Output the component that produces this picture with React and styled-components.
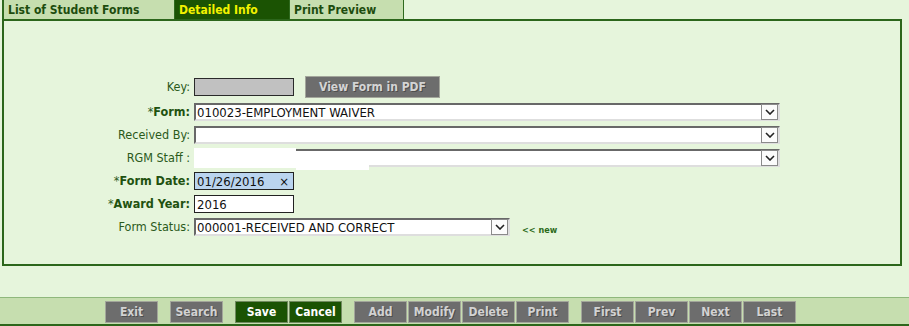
import React from "react"
import styled, { createGlobalStyle } from "styled-components"

const GlobalStyle = createGlobalStyle`
  html, body {
    margin: 0;
    padding: 0;
    background: #e6f5dc;
  }
  body {
    font-family: Tahoma, "DejaVu Sans Condensed", "DejaVu Sans", sans-serif;
  }
`

const tabs = [
    { label: "List of Student Forms", width: 173 },
    { label: "Detailed Info", width: 115, active: true },
    { label: "Print Preview", width: 114 },
]

const buttonGroups = [
    [{ label: "Exit" }],
    [{ label: "Search" }],
    [{ label: "Save", primary: true }, { label: "Cancel", primary: true }],
    [{ label: "Add" }, { label: "Modify" }, { label: "Delete" }, { label: "Print" }],
    [{ label: "First" }, { label: "Prev" }, { label: "Next" }, { label: "Last" }],
]

function Chevron() {
    return (
        <svg width="10" height="6" viewBox="0 0 10 6">
            <path d="M1 1 L5 5 L9 1" fill="none" stroke="#222" strokeWidth="1.6" />
        </svg>
    )
}

function Select({ width, value, children }) {
    return (
        <SelectBox $width={width}>
            <SelectText>{value}</SelectText>
            {children}
            <ArrowBox><Chevron /></ArrowBox>
        </SelectBox>
    )
}

export default function App() {
    return (
        <>
            <GlobalStyle />
            <Page>
                <TabBar>
                    {tabs.map((t, i) => (
                        <Tab key={t.label} $width={t.width} $active={t.active} $first={i === 0}>
                            {t.label}
                        </Tab>
                    ))}
                </TabBar>
                <Panel>
                    <FormGrid>
                        <Label>Key:</Label>
                        <Row>
                            <KeyInput />
                            <PdfButton>View Form in PDF</PdfButton>
                        </Row>

                        <Label><Star>*</Star><b>Form:</b></Label>
                        <Select width={586} value="010023-EMPLOYMENT WAIVER" />

                        <Label>Received By:</Label>
                        <Select width={586} value="" />

                        <Label>RGM Staff :</Label>
                        <Select width={586} value="">
                            <Redact style={{ left: -2, top: -3, width: 102, height: 20 }} />
                            <Redact style={{ left: 100, top: 1, width: 73, height: 18 }} />
                        </Select>

                        <Label><Star>*</Star><b>Form Date:</b></Label>
                        <DateInput>
                            <span>01/26/2016</span>
                            <Clear>×</Clear>
                        </DateInput>

                        <Label><Star>*</Star><b>Award Year:</b></Label>
                        <TextInput>2016</TextInput>

                        <Label>Form Status:</Label>
                        <Row>
                            <Select width={316} value="000001-RECEIVED AND CORRECT" />
                            <NewLink>&lt;&lt; new</NewLink>
                        </Row>
                    </FormGrid>
                </Panel>
                <Footer>
                    {buttonGroups.map((g, i) => (
                        <ButtonGroup key={i}>
                            {g.map((b) => (
                                <ActionButton key={b.label} $primary={b.primary}>{b.label}</ActionButton>
                            ))}
                        </ButtonGroup>
                    ))}
                </Footer>
            </Page>
        </>
    )
}

// styled-components
const Page = styled.div`
width: 909px;
height: 326px;
display: flex;
flex-direction: column;
background: #e6f5dc;
`

const TabBar = styled.div`
display: flex;
height: 19px;
padding-left: 2px;
`

const Tab = styled.div`
box-sizing: border-box;
width: ${(p) => p.$width}px;
height: 19px;
padding: 3px 0 0 4px;
background: ${(p) => (p.$active ? "#1b5303" : "#c6deaf")};
color: ${(p) => (p.$active ? "#f2f200" : "#1d4c0e")};
border-right: 1px solid #2f6a1f;
border-left: ${(p) => (p.$first ? "2px solid #2f6a1f" : "none")};
font-size: 12px;
font-weight: 700;
white-space: nowrap;
overflow: hidden;
`

const Panel = styled.div`
box-sizing: border-box;
width: 900px;
height: 247px;
margin-left: 2px;
border: 2px solid #2c661b;
padding-top: 55px;
`

const FormGrid = styled.div`
display: grid;
grid-template-columns: 186px 1fr;
column-gap: 4px;
row-gap: 5px;
align-items: center;
`

const Label = styled.div`
text-align: right;
font-size: 12.5px;
line-height: 18px;
color: #2b5a1b;
white-space: nowrap;

b {
    font-weight: 700;
    color: #1f5210;
}
`

const Star = styled.span`
font-weight: 400;
`

const Row = styled.div`
display: flex;
align-items: center;
`

const KeyInput = styled.div`
box-sizing: border-box;
width: 100px;
height: 18px;
background: #c1c1c1;
border: 1px solid #2a2a2a;
`

const PdfButton = styled.div`
box-sizing: border-box;
width: 135px;
height: 22px;
margin-left: 11px;
display: flex;
align-items: center;
justify-content: center;
background: #6d6d6d;
border: 1px solid #a3a69b;
color: #d4d4d4;
font-size: 12px;
font-weight: 700;
text-shadow: 1px 1px 0 #4e4e4e;
`

const SelectBox = styled.div`
position: relative;
box-sizing: border-box;
width: ${(p) => p.$width}px;
height: 18px;
display: flex;
align-items: center;
background: #fff;
border-top: 2px solid #686868;
border-left: 2px solid #686868;
border-bottom: 2px solid #dedede;
border-right: 2px solid #dedede;
`

const SelectText = styled.div`
flex: 1;
padding-left: 1px;
font-size: 13px;
color: #111;
white-space: nowrap;
`

const ArrowBox = styled.div`
box-sizing: border-box;
width: 17px;
height: 16px;
margin-top: -1px;
display: flex;
align-items: center;
justify-content: center;
background: #fbfbfb;
border: 1px solid #8a8a8a;
`

const Redact = styled.div`
position: absolute;
background: #fff;
`

const DateInput = styled.div`
box-sizing: border-box;
width: 100px;
height: 18px;
display: flex;
align-items: center;
justify-content: space-between;
padding: 0 4px 0 2px;
background: #bad4ef;
border: 1px solid #222;
font-size: 13px;
color: #111;
`

const Clear = styled.span`
font-size: 13px;
`

const TextInput = styled.div`
box-sizing: border-box;
width: 100px;
height: 18px;
display: flex;
align-items: center;
padding-left: 2px;
background: #fff;
border: 1px solid #222;
font-size: 13px;
color: #111;
`

const NewLink = styled.span`
margin: 5px 0 0 12px;
font-size: 9px;
font-weight: 700;
color: #2b6a1a;
`

const Footer = styled.div`
box-sizing: border-box;
margin-top: 31px;
height: 29px;
display: flex;
align-items: flex-start;
gap: 12px;
padding: 3px 0 0 105px;
background: #c6deaf;
border-top: 1px solid #8fb87c;
border-bottom: 2px solid #2c661b;
`

const ButtonGroup = styled.div`
display: flex;
gap: 1px;
`

const ActionButton = styled.div`
box-sizing: border-box;
width: 53px;
height: 22px;
display: flex;
align-items: center;
justify-content: center;
background: ${(p) => (p.$primary ? "#1b5303" : "#6d6d6d")};
border: 1px solid ${(p) => (p.$primary ? "#718a60" : "#a3a69b")};
color: ${(p) => (p.$primary ? "#ffffff" : "#d2d2d2")};
text-shadow: ${(p) => (p.$primary ? "none" : "1px 1px 0 #4e4e4e")};
font-size: 12px;
font-weight: 700;
`
